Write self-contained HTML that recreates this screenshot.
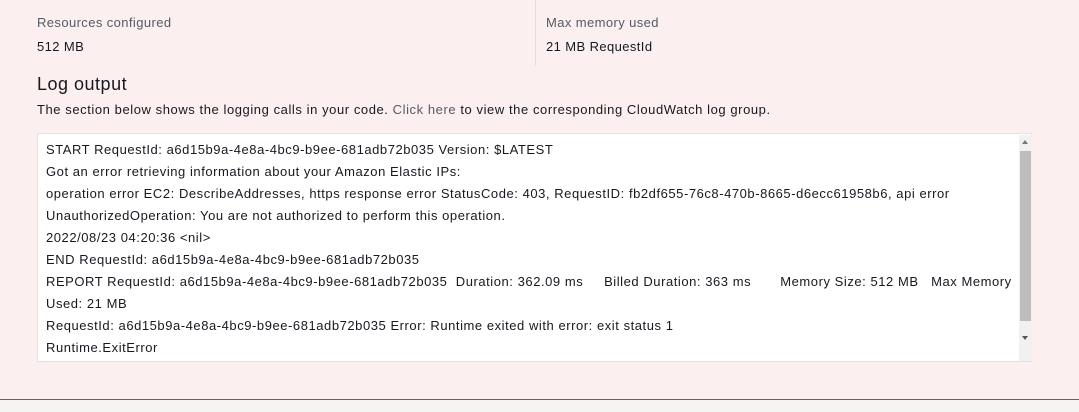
<!DOCTYPE html>
<html><head><style>
body{margin:0;width:1079px;height:412px;background:#fbf0ef;font-family:"Liberation Sans",sans-serif;position:relative;overflow:hidden;color:#16191f}
.a{position:absolute;white-space:nowrap}
.lbl{font-size:13px;color:#545b64;letter-spacing:.4px}
.val{font-size:13px;letter-spacing:.4px}
.box{position:absolute;left:37px;top:133px;width:995px;height:229px;background:#fff;border:1px solid #e6e0df;box-sizing:border-box}
.log{position:absolute;left:8px;top:5px;font-size:13px;line-height:22px;white-space:pre;letter-spacing:.55px}
.sb{position:absolute;left:981px;top:1px;width:13px;height:226px;background:#f1f1f1}
.th{position:absolute;left:1px;top:16px;width:11px;height:170px;background:#bdbdbd}
</style></head><body>
<div class="a lbl" style="left:37px;top:15px">Resources configured</div>
<div class="a val" style="left:37px;top:39px">512 MB</div>
<div style="position:absolute;left:535px;top:0;width:1px;height:66px;background:#e6dcdb"></div>
<div class="a lbl" style="left:546px;top:15px">Max memory used</div>
<div class="a val" style="left:546px;top:39px">21 MB RequestId</div>
<div class="a" style="left:37px;top:74px;font-size:18px;letter-spacing:.5px">Log output</div>
<div class="a" style="left:37px;top:102px;font-size:13px;letter-spacing:.57px">The section below shows the logging calls in your code. <span style="color:#545b64">Click here</span> to view the corresponding CloudWatch log group.</div>
<div class="box">
<div class="log">START RequestId: a6d15b9a-4e8a-4bc9-b9ee-681adb72b035 Version: $LATEST
Got an error retrieving information about your Amazon Elastic IPs:
operation error EC2: DescribeAddresses, https response error StatusCode: 403, RequestID: fb2df655-76c8-470b-8665-d6ecc61958b6, api error
UnauthorizedOperation: You are not authorized to perform this operation.
2022/08/23 04:20:36 &lt;nil&gt;
END RequestId: a6d15b9a-4e8a-4bc9-b9ee-681adb72b035
REPORT RequestId: a6d15b9a-4e8a-4bc9-b9ee-681adb72b035  Duration: 362.09 ms     Billed Duration: 363 ms       Memory Size: 512 MB   Max Memory
Used: 21 MB
RequestId: a6d15b9a-4e8a-4bc9-b9ee-681adb72b035 Error: Runtime exited with error: exit status 1
Runtime.ExitError</div>
<div class="sb"><div class="th"></div>
<div style="position:absolute;left:3px;top:5px;border:3px solid transparent;border-bottom:4px solid #777;border-top:0"></div>
<div style="position:absolute;left:3px;top:201px;border:3px solid transparent;border-top:4px solid #555;border-bottom:0"></div>
</div>
</div>
<div style="position:absolute;left:0;top:399px;width:1079px;height:1px;background:#6e5f5e"></div>
<div style="position:absolute;left:0;top:400px;width:1079px;height:12px;background:#f6f3f3"></div>
</body></html>
